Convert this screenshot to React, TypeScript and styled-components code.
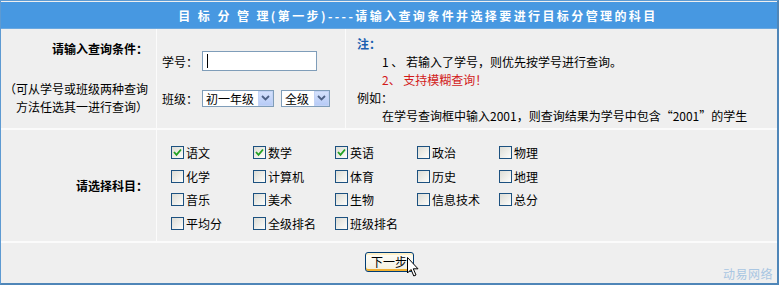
import React from 'react'
import styled, { createGlobalStyle } from 'styled-components'

const GlobalStyle = createGlobalStyle`
  html, body {
    margin: 0;
    padding: 0;
    background: #ffffff;
  }
  body {
    font-family: 'Noto Sans CJK SC', 'DejaVu Sans', sans-serif;
    font-size: 12px;
    color: #000;
  }
`

const Frame = styled.div`
  position: relative;
  width: 776px;
  height: 282px;
  border: 1px solid #5d9ad2;
  border-right: 2px solid #4f86b8;
  border-bottom: 2px solid #4f86b8;
  background: #efefef;
  overflow: hidden;
`
const Header = styled.div`
  height: 26px;
  margin-top: 1px;
  background: #4798e1;
  color: #fff;
  font-weight: bold;
  font-size: 12px;
  display: flex;
  align-items: center;
  justify-content: center;
  padding-left: 58px;
  border-bottom: 1px solid #6aa8e0;
  letter-spacing: 2.4px;
  white-space: pre;
`
const Row = styled.div<{ $height: number }>`
  display: flex;
  height: ${p => p.$height}px;
  border-bottom: 2px solid #fbfbfb;
`
const LabelCell = styled.div<{ $center?: boolean }>`
  width: 156px;
  flex: none;
  border-right: 1px solid #fbfbfb;
  box-sizing: border-box;
  padding-right: 8px;
  text-align: right;
  display: flex;
  flex-direction: column;
  align-items: flex-end;
  justify-content: ${p => (p.$center ? 'center' : 'flex-start')};
`
const Title = styled.div<{ $top?: number }>`
  font-weight: bold;
  line-height: 18px;
  margin-top: ${p => p.$top ?? 0}px;
`
const Hint = styled.div`
  line-height: 18px;
  margin-top: 22px;
`
const QueryCell = styled.div`
  width: 189px;
  flex: none;
  border-right: 1px solid #fbfbfb;
  box-sizing: border-box;
  padding: 22px 0 0 5px;
  display: flex;
  flex-direction: column;
  gap: 17px;
`
const Field = styled.div`
  display: flex;
  align-items: center;
  height: 20px;
`
const FieldLabel = styled.span`
  width: 40px;
  flex: none;
`
const TextBox = styled.div`
  width: 113px;
  height: 18px;
  border: 1px solid #7f9db9;
  background: #fff;
  position: relative;
  &::after {
    content: '';
    position: absolute;
    left: 4px;
    top: 2px;
    width: 1px;
    height: 14px;
    background: #000;
  }
`
const Select = styled.div<{ $width: number }>`
  width: ${p => p.$width}px;
  height: 17px;
  border: 1px solid #7f9db9;
  background: #fff;
  display: flex;
  align-items: center;
  justify-content: space-between;
  padding-left: 3px;
  margin-right: 7px;
  box-sizing: border-box;
  white-space: nowrap;
  flex: none;
`
const SelectButton = styled.span`
  width: 15px;
  height: 15px;
  background: linear-gradient(#d4e1fc, #b7cbf6);
  border: 1px solid #c3d3f5;
  box-sizing: border-box;
  display: flex;
  align-items: center;
  justify-content: center;
`
const NoteCell = styled.div`
  flex: 1;
  padding: 6px 0 0 11px;
  line-height: 18px;
`
const NoteTitle = styled.div`
  color: #1a5fb0;
  font-weight: bold;
`
const NoteLine = styled.div<{ $red?: boolean }>`
  padding-left: 25px;
  color: ${p => (p.$red ? '#d21a1a' : '#000')};
`
const SubjectGrid = styled.div`
  display: grid;
  grid-template-columns: repeat(5, 82px);
  grid-auto-rows: 23.5px;
  padding: 11px 0 0 14px;
`
const Item = styled.label`
  display: flex;
  align-items: center;
  gap: 2px;
`
const Box = styled.span`
  width: 11px;
  height: 11px;
  border: 1px solid #1c5180;
  background: linear-gradient(135deg, #dcdcd5, #fdfdfb);
  display: flex;
  align-items: center;
  justify-content: center;
`
const Footer = styled.div`
  display: flex;
  justify-content: center;
  padding-top: 9px;
`
const ButtonWrap = styled.div`
  position: relative;
`
const NextButton = styled.button`
  width: 49px;
  height: 20px;
  padding: 0;
  font-family: inherit;
  font-size: 12px;
  border: 1px solid #003c74;
  border-radius: 3px;
  background: linear-gradient(#fffef8, #f2efe0);
  box-shadow: inset 0 -2px 0 #f0b030, inset 0 2px 0 #fff1c8;
  color: #000;
  line-height: 16px;
`
const Cursor = styled.svg`
  position: absolute;
  left: 42px;
  top: 5px;
`
const Watermark = styled.div`
  position: absolute;
  right: 4px;
  bottom: 1px;
  color: #a9c6e2;
  font-size: 12px;
  letter-spacing: 0.5px;
`

const subjects = [
  { name: '语文', checked: true },
  { name: '数学', checked: true },
  { name: '英语', checked: true },
  { name: '政治' },
  { name: '物理' },
  { name: '化学' },
  { name: '计算机' },
  { name: '体育' },
  { name: '历史' },
  { name: '地理' },
  { name: '音乐' },
  { name: '美术' },
  { name: '生物' },
  { name: '信息技术' },
  { name: '总分' },
  { name: '平均分' },
  { name: '全级排名' },
  { name: '班级排名' }
]

const Chevron = () => (
  <svg width="9" height="6" viewBox="0 0 9 6">
    <path d="M1 1 L4.5 4.5 L8 1" fill="none" stroke="#4d6185" strokeWidth="1.8" />
  </svg>
)

const Check = () => (
  <svg width="9" height="9" viewBox="0 0 9 9">
    <path d="M1 4 L3.5 6.8 L8 1.5" fill="none" stroke="#21a121" strokeWidth="1.8" />
  </svg>
)

const App: React.FC = () => {
  return (
    <>
      <GlobalStyle />
      <Frame>
        <Header>目 标 分 管 理(第一步)----请输入查询条件并选择要进行目标分管理的科目</Header>
        <Row $height={99}>
          <LabelCell>
            <Title $top={11}>请输入查询条件：</Title>
            <Hint>
              （可从学号或班级两种查询
              <br />
              方法任选其一进行查询）
            </Hint>
          </LabelCell>
          <QueryCell>
            <Field>
              <FieldLabel>学号：</FieldLabel>
              <TextBox />
            </Field>
            <Field>
              <FieldLabel>班级：</FieldLabel>
              <Select $width={72}>
                初一年级
                <SelectButton>
                  <Chevron />
                </SelectButton>
              </Select>
              <Select $width={49}>
                全级
                <SelectButton>
                  <Chevron />
                </SelectButton>
              </Select>
            </Field>
          </QueryCell>
          <NoteCell>
            <NoteTitle>注：</NoteTitle>
            <NoteLine>1 、 若输入了学号，则优先按学号进行查询。</NoteLine>
            <NoteLine $red>2、 支持模糊查询！</NoteLine>
            <div>例如：</div>
            <NoteLine>在学号查询框中输入2001，则查询结果为学号中包含“2001”的学生</NoteLine>
          </NoteCell>
        </Row>
        <Row $height={111}>
          <LabelCell $center>
            <Title>请选择科目：</Title>
          </LabelCell>
          <SubjectGrid>
            {subjects.map(s => (
              <Item key={s.name}>
                <Box>{s.checked && <Check />}</Box>
                {s.name}
              </Item>
            ))}
          </SubjectGrid>
        </Row>
        <Footer>
          <ButtonWrap>
            <NextButton>下一步</NextButton>
            <Cursor width="13" height="21" viewBox="0 0 13 21">
              <path
                d="M0.5 0.5 L0.5 16 L4 12.5 L6.8 19 L9 18 L6.3 11.8 L11 11.8 Z"
                fill="#fff"
                stroke="#000"
                strokeWidth="1"
              />
            </Cursor>
          </ButtonWrap>
        </Footer>
        <Watermark>动易网络</Watermark>
      </Frame>
    </>
  )
}

export default App
